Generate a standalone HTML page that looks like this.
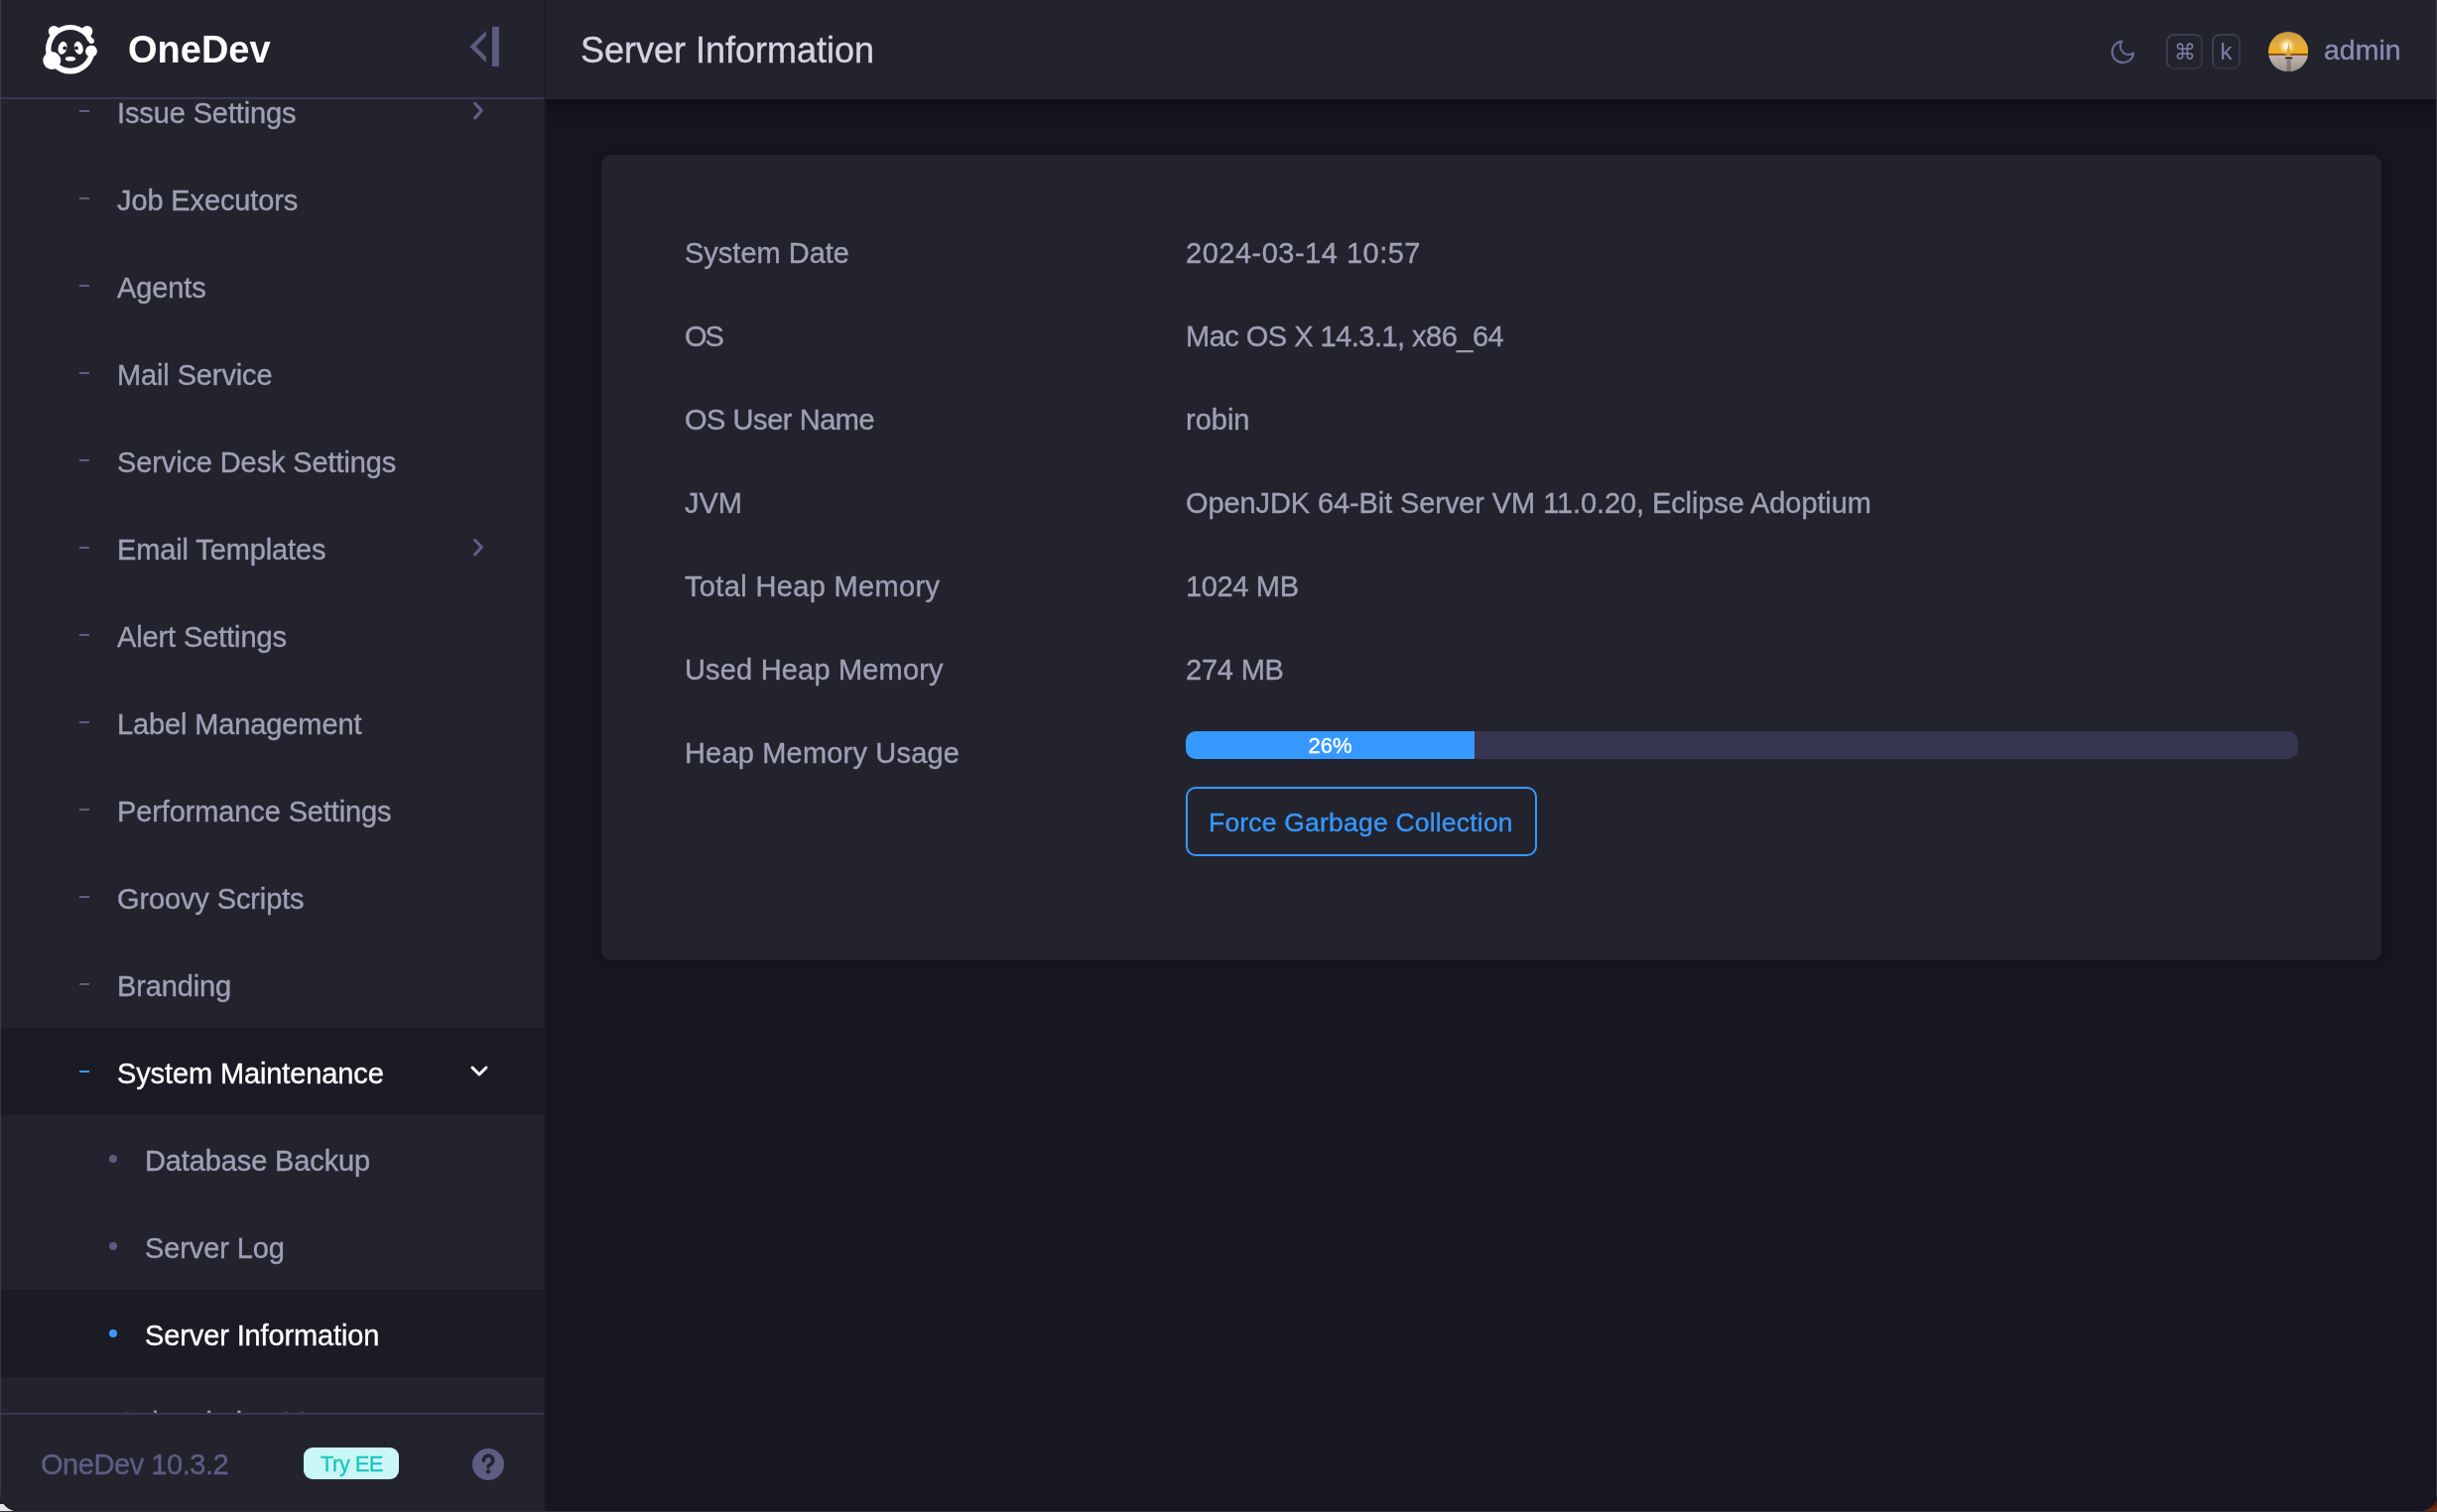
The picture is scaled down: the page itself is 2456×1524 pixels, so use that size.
<!DOCTYPE html>
<html>
<head>
<meta charset="utf-8">
<style>
*{margin:0;padding:0;box-sizing:border-box}
html,body{width:2456px;height:1524px;overflow:hidden;background:#17151f;font-family:"Liberation Sans",sans-serif;-webkit-font-smoothing:antialiased}
.abs{position:absolute}
#win{position:absolute;left:0;top:0;width:2456px;height:1523px;background:#171522;overflow:hidden;border-radius:0 0 17px 18px}
#sidebar{position:absolute;left:0;top:0;width:548px;height:1524px;background:#23232e}
#divider{position:absolute;left:548px;top:0;width:2px;height:1524px;background:#1c1b27}
#header{position:absolute;left:550px;top:0;width:1906px;height:100px;background:#23232e}
.txt{position:absolute;white-space:nowrap;line-height:1}
.item .lbl,.row .k,.row .v,.txt{will-change:transform;-webkit-text-stroke:0.35px currentColor}
.item{position:absolute;left:0;width:548px;height:88px}
.item .dash{position:absolute;left:80px;top:43px;width:10px;height:2px;background:#5d5c85}
.item .lbl{position:absolute;left:118px;top:31px;font-size:29px;line-height:30px;letter-spacing:-0.12px;color:#9fa0b5;white-space:nowrap}
.item .bul{position:absolute;left:110px;top:40px;width:8px;height:8px;border-radius:50%;background:#5d5c80}
.item.sub .lbl{left:146.2px}
.row{position:absolute;left:0;height:40px}
.row .k{position:absolute;left:84px;top:0;font-size:29px;line-height:40px;color:#9fa0b5;white-space:nowrap}
.row .v{position:absolute;left:589px;top:0;font-size:29px;line-height:40px;color:#9fa0b5;white-space:nowrap}
</style>
</head>
<body>
<div class="abs" style="left:0;top:1496px;width:30px;height:28px;background:#e4e4e6"></div>
<div class="abs" style="left:0;top:1500px;width:3px;height:16px;background:#1a2530"></div>
<div class="abs" style="left:2426px;top:1496px;width:30px;height:28px;background:linear-gradient(160deg,#06090e 40%,#3a1a10 70%,#8a3010)"></div>
<div class="abs" style="left:0;top:1523px;width:2456px;height:1px;background:#2d2c38"></div>
<div id="win">
  <div id="sidebar">
    <div id="menu" style="position:absolute;left:0;top:100px;width:548px;height:1324px;overflow:hidden">
      <div style="position:absolute;left:0;top:-100px;width:548px;height:1524px">
        <div class="item" style="top:68px"><div class="dash"></div><div class="lbl">Issue Settings</div>
          <svg class="abs" style="left:470px;top:32px" width="22" height="24" viewBox="0 0 22 24"><path d="M8.6 4.3 L15.3 11.6 L8.6 18.9" fill="none" stroke="#60608a" stroke-width="3" stroke-linecap="round" stroke-linejoin="round"/></svg></div>
        <div class="item" style="top:156px"><div class="dash"></div><div class="lbl">Job Executors</div></div>
        <div class="item" style="top:244px"><div class="dash"></div><div class="lbl">Agents</div></div>
        <div class="item" style="top:332px"><div class="dash"></div><div class="lbl">Mail Service</div></div>
        <div class="item" style="top:420px"><div class="dash"></div><div class="lbl">Service Desk Settings</div></div>
        <div class="item" style="top:508px"><div class="dash"></div><div class="lbl">Email Templates</div>
          <svg class="abs" style="left:470px;top:32px" width="22" height="24" viewBox="0 0 22 24"><path d="M8.6 4.3 L15.3 11.6 L8.6 18.9" fill="none" stroke="#60608a" stroke-width="3" stroke-linecap="round" stroke-linejoin="round"/></svg></div>
        <div class="item" style="top:596px"><div class="dash"></div><div class="lbl">Alert Settings</div></div>
        <div class="item" style="top:684px"><div class="dash"></div><div class="lbl">Label Management</div></div>
        <div class="item" style="top:772px"><div class="dash"></div><div class="lbl">Performance Settings</div></div>
        <div class="item" style="top:860px"><div class="dash"></div><div class="lbl">Groovy Scripts</div></div>
        <div class="item" style="top:948px"><div class="dash"></div><div class="lbl">Branding</div></div>
        <div class="item" style="top:1036px;background:#1b1b26"><div class="dash" style="background:#3699ff"></div><div class="lbl" style="color:#ffffff">System Maintenance</div>
          <svg class="abs" style="left:470.7px;top:34.7px" width="24" height="20" viewBox="0 0 24 20"><path d="M5 5 L12 12 L19 5" fill="none" stroke="#ffffff" stroke-width="3" stroke-linecap="round" stroke-linejoin="round"/></svg></div>
        <div class="item sub" style="top:1124px"><div class="bul"></div><div class="lbl">Database Backup</div></div>
        <div class="item sub" style="top:1212px"><div class="bul"></div><div class="lbl">Server Log</div></div>
        <div class="item sub" style="top:1300px;background:#1b1b26"><div class="bul" style="background:#3699ff"></div><div class="lbl" style="color:#ffffff">Server Information</div></div>
        <div class="item" style="top:1388px"><div class="dash"></div><div class="lbl">Subscription Management</div></div>
      </div>
    </div>
    <!-- logo area -->
    <div class="abs" style="left:0;top:0;width:548px;height:98px;background:#23232e"></div>
    <div class="abs" style="left:0;top:98px;width:548px;height:2px;background:#383752"></div>
    <svg class="abs" style="left:0;top:0" width="120" height="98" viewBox="0 0 120 98">
      <g fill="#ffffff">
        <circle cx="70.8" cy="49.8" r="24.8"/>
        <circle cx="54.4" cy="31.5" r="5.6"/>
        <circle cx="87.8" cy="31.5" r="5.5"/>
      </g>
      <circle cx="70.9" cy="49.3" r="19.4" fill="#23232e"/>
      <path d="M84 41.6 L100 41.6 L100 46.4 L84 46.4 Z" fill="#23232e"/>
      <circle cx="92.2" cy="41.3" r="2.75" fill="#ffffff"/>
      <circle cx="52.3" cy="61" r="9" fill="#ffffff"/>
      <circle cx="92" cy="51.7" r="5.9" fill="#ffffff"/>
      <ellipse cx="63" cy="48.3" rx="4.3" ry="6.6" fill="#fff" transform="rotate(15 63 48.3)"/>
      <ellipse cx="79.3" cy="48.3" rx="4.3" ry="6.6" fill="#fff" transform="rotate(-15 79.3 48.3)"/>
      <circle cx="65.2" cy="48.4" r="1.9" fill="#23232e"/>
      <circle cx="77" cy="48.4" r="1.9" fill="#23232e"/>
      <ellipse cx="71" cy="59.2" rx="5.1" ry="2.3" fill="#fff"/>
    </svg>
    <div class="txt" style="left:129px;top:29px;font-size:38px;font-weight:bold;color:#ffffff;line-height:42px;-webkit-text-stroke:0">OneDev</div>
    <svg class="abs" style="left:466px;top:24px" width="44" height="46" viewBox="466 24 44 46">
      <path d="M489.8 30.9 L489.8 36.5 L479.6 46.9 L489.8 57.1 L489.8 62.9 L473.3 46.9 Z" fill="#5c5b82"/>
      <rect x="496" y="26.9" width="6.9" height="40" fill="#5c5b82"/>
    </svg>
    <!-- footer -->
    <div class="abs" style="left:0;top:1424px;width:548px;height:2px;background:#383752"></div>
    <div class="abs" style="left:0;top:1426px;width:548px;height:98px;background:#23232e"></div>
    <div class="txt" style="left:41px;top:1461px;font-size:29px;line-height:30px;letter-spacing:-0.45px;color:#5e5d85">OneDev 10.3.2</div>
    <div class="abs" style="left:306px;top:1459px;width:96px;height:32px;border-radius:9px;background:#c9f7f5"></div>
    <div class="txt" style="left:322.5px;top:1464px;font-size:21.5px;line-height:24px;letter-spacing:-0.3px;color:#1bc5bd">Try EE</div>
    <svg class="abs" style="left:476px;top:1460px" width="32" height="32" viewBox="476 1460 32 32">
      <circle cx="492" cy="1476" r="16" fill="#5d5c82"/>
      <path d="M487.4 1472.2 A4.75 4.75 0 1 1 494.4 1476.1 Q492.1 1477.3 492.1 1478.4" fill="none" stroke="#23232e" stroke-width="3.6" stroke-linecap="round"/>
      <circle cx="492.1" cy="1483.3" r="2.2" fill="#23232e"/>
    </svg>
  </div>
  <div id="divider"></div>
  <div id="header">
    <div class="txt" style="left:35px;top:32px;font-size:36px;line-height:38px;color:#d5d4e3">Server Information</div>
    <!-- moon -->
    <svg class="abs" style="left:1574.6px;top:37.6px" width="28.8" height="28.8" viewBox="0 0 24 24">
      <path d="M21 12.79A9 9 0 1 1 11.21 3 7 7 0 0 0 21 12.79z" fill="none" stroke="#686a90" stroke-width="1.75" stroke-linecap="round" stroke-linejoin="round"/>
    </svg>
    <div class="abs" style="left:1633px;top:34px;width:37px;height:36px;border:2px solid #3b3d51;border-bottom-color:#2f3142;border-right-color:#34364a;border-radius:8px"></div>
    <div class="txt" style="left:1633px;top:40px;width:37px;text-align:center;font-size:22px;line-height:26px;color:#7c80a8;-webkit-text-stroke:0">&#8984;</div>
    <div class="abs" style="left:1679px;top:34px;width:29px;height:36px;border:2px solid #3b3d51;border-bottom-color:#2f3142;border-right-color:#34364a;border-radius:8px"></div>
    <div class="txt" style="left:1679px;top:38.5px;width:29px;text-align:center;font-size:24px;line-height:26px;color:#7c80a8;-webkit-text-stroke:0">k</div>
    <!-- avatar -->
    <svg class="abs" style="left:1735.8px;top:31.8px" width="40.3" height="40.3" viewBox="0 0 40 40">
      <defs>
        <clipPath id="avc"><circle cx="20" cy="20" r="20"/></clipPath>
        <linearGradient id="sky" x1="0" y1="0" x2="0" y2="1">
          <stop offset="0" stop-color="#c99a3a"/>
          <stop offset="0.3" stop-color="#e2ac40"/>
          <stop offset="0.52" stop-color="#f0b020"/>
          <stop offset="0.555" stop-color="#e09010"/>
          <stop offset="0.56" stop-color="#6a3010"/>
          <stop offset="0.585" stop-color="#8a6040"/>
          <stop offset="0.6" stop-color="#c0b4ac"/>
          <stop offset="1" stop-color="#9a948e"/>
        </linearGradient>
        <radialGradient id="sun" cx="0.46" cy="0.36" r="0.22">
          <stop offset="0" stop-color="#ffffff"/>
          <stop offset="0.35" stop-color="#fff4d0" stop-opacity="0.85"/>
          <stop offset="1" stop-color="#ffe090" stop-opacity="0"/>
        </radialGradient>
      </defs>
      <g clip-path="url(#avc)">
        <rect x="0" y="0" width="40" height="40" fill="url(#sky)"/>
        <rect x="0" y="0" width="40" height="40" fill="url(#sun)"/>
        <path d="M20.5 11 L22.5 25 L17.5 25 Z" fill="#d8a040"/>
        <rect x="17" y="25.6" width="7" height="1.4" fill="#101010"/>
        <rect x="18.5" y="27" width="4" height="13" fill="#5a4a3a" opacity="0.45"/>
      </g>
    </svg>
    <div class="txt" style="left:1792px;top:34px;font-size:28.5px;line-height:32px;color:#8a8db3">admin</div>
  </div>
  <div class="abs" style="left:550px;top:100px;width:1906px;height:30px;background:linear-gradient(#0f0f19,rgba(16,16,26,0.55) 35%,rgba(23,21,34,0))"></div>
  <!-- card -->
  <div id="card" class="abs" style="left:606px;top:156px;width:1794px;height:812px;background:#23232e;border-radius:10px;box-shadow:0 0 6px rgba(10,10,16,0.5)">
    <div class="row" style="top:79px"><div class="k">System Date</div><div class="v" style="letter-spacing:0.5px">2024-03-14 10:57</div></div>
    <div class="row" style="top:163px"><div class="k" style="letter-spacing:-2px">OS</div><div class="v" style="letter-spacing:-0.52px">Mac OS X 14.3.1, x86_64</div></div>
    <div class="row" style="top:247px"><div class="k" style="letter-spacing:-0.45px">OS User Name</div><div class="v">robin</div></div>
    <div class="row" style="top:331px"><div class="k">JVM</div><div class="v" style="letter-spacing:-0.1px">OpenJDK 64-Bit Server VM 11.0.20, Eclipse Adoptium</div></div>
    <div class="row" style="top:415px"><div class="k" style="letter-spacing:0.35px">Total Heap Memory</div><div class="v" style="letter-spacing:-0.35px">1024 MB</div></div>
    <div class="row" style="top:499px"><div class="k" style="letter-spacing:0.18px">Used Heap Memory</div><div class="v" style="letter-spacing:-0.2px">274 MB</div></div>
    <div class="row" style="top:583px"><div class="k" style="letter-spacing:0.18px">Heap Memory Usage</div></div>
    <div class="abs" style="left:589px;top:581px;width:1121px;height:28px;border-radius:10px;background:#363550;overflow:hidden">
      <div class="abs" style="left:0;top:0;width:291px;height:28px;background:#3699ff"></div>
      <div class="txt" style="left:0;top:3px;width:291px;text-align:center;font-size:22px;line-height:24px;color:#ffffff">26%</div>
    </div>
    <div class="abs" style="left:589px;top:637px;width:354px;height:70px;border:2px solid #3699ff;border-radius:10px"></div>
    <div class="txt" style="left:612px;top:657.5px;font-size:26.5px;line-height:30px;letter-spacing:0.2px;color:#3699ff">Force Garbage Collection</div>
  </div>
  <!-- window edges -->
  <div class="abs" style="left:0;top:0;width:1px;height:1524px;background:#3b3b47"></div>
  <div class="abs" style="left:2455px;top:0;width:1px;height:1524px;background:#3b3b47"></div>
</div>
</body>
</html>
